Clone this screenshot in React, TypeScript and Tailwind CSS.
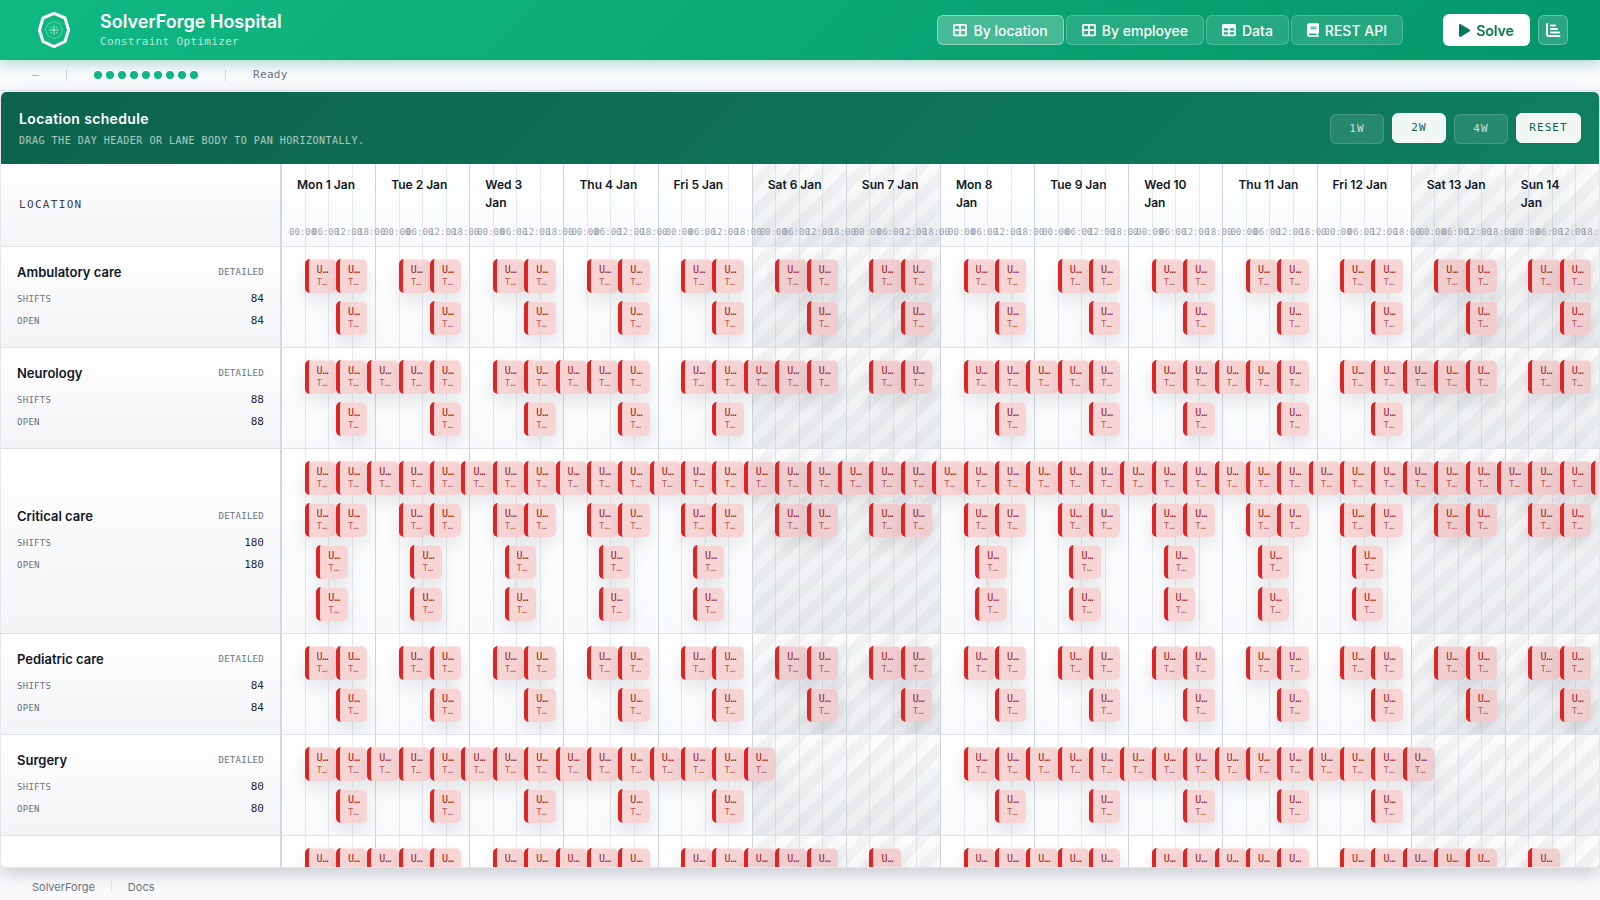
import React, { useState } from 'react';
import { FaPlay } from 'react-icons/fa';

type LaneRule = { hours: number[]; days: number[] };

interface LocationRow {
  name: string;
  count: number;
  lanes: LaneRule[][];
}

const DAYS = [
  'Mon 1 Jan', 'Tue 2 Jan', 'Wed 3\nJan', 'Thu 4 Jan', 'Fri 5 Jan', 'Sat 6 Jan', 'Sun 7 Jan',
  'Mon 8\nJan', 'Tue 9 Jan', 'Wed 10\nJan', 'Thu 11 Jan', 'Fri 12 Jan', 'Sat 13 Jan', 'Sun 14\nJan',
];
const TICKS = ['00:00', '06:00', '12:00', '18:00'];
const TOTAL_HOURS = DAYS.length * 24;
const SHIFT_HOURS = 8;

const ALL = DAYS.map((_, i) => i);
const WEEKDAYS = ALL.filter((i) => i % 7 < 5);
const ALTERNATE = [0, 2, 4, 7, 9, 11];
const NOT_SUNDAY = ALL.filter((i) => i % 7 !== 6);

const ROWS: LocationRow[] = [
  { name: 'Ambulatory care', count: 84, lanes: [[{ hours: [6, 14], days: ALL }], [{ hours: [14], days: ALL }]] },
  {
    name: 'Neurology',
    count: 88,
    lanes: [
      [{ hours: [6, 14], days: ALL }, { hours: [22], days: ALTERNATE }],
      [{ hours: [14], days: WEEKDAYS }],
    ],
  },
  {
    name: 'Critical care',
    count: 180,
    lanes: [
      [{ hours: [6, 14, 22], days: ALL }],
      [{ hours: [6, 14], days: ALL }],
      [{ hours: [9], days: WEEKDAYS }],
      [{ hours: [9], days: WEEKDAYS }],
    ],
  },
  { name: 'Pediatric care', count: 84, lanes: [[{ hours: [6, 14], days: ALL }], [{ hours: [14], days: ALL }]] },
  {
    name: 'Surgery',
    count: 80,
    lanes: [[{ hours: [6, 14, 22], days: WEEKDAYS }], [{ hours: [14], days: WEEKDAYS }]],
  },
  {
    name: 'Radiology',
    count: 84,
    lanes: [
      [{ hours: [6], days: ALL }, { hours: [14], days: NOT_SUNDAY }, { hours: [22], days: ALTERNATE }],
      [{ hours: [14], days: WEEKDAYS }],
      [{ hours: [9], days: WEEKDAYS }],
      [{ hours: [9], days: WEEKDAYS }],
    ],
  },
];

const startsOf = (rules: LaneRule[]) =>
  rules.flatMap((r) => r.days.flatMap((d) => r.hours.map((h) => d * 24 + h))).sort((a, b) => a - b);

// a shift counts as weekend work when it ends on a Saturday or Sunday
const endsOnWeekend = (start: number) => Math.floor((start + SHIFT_HOURS - 1) / 24) % 7 > 4;

const MONO = "font-['DejaVu_Sans_Mono',monospace]";

function Logo() {
  return (
    <svg viewBox="0 0 40 40" className="w-10 h-10" fill="none" stroke="white">
      <path d="M20 3.300 31 8 34.600 20 31 31.500 20 36.700 9 31.500 5.400 20 9 8Z" strokeWidth="3" strokeLinejoin="round" />
      <path d="M20 11.500 26 14 28.500 20 26 26 20 28.500 14 26 11.500 20 14 14Z" strokeWidth=".8" opacity=".4" />
      <path d="M20 15v10M15 20h10M16.500 16.500l1.500 1.500M23.500 16.500l-1.500 1.500M16.500 23.500l1.500-1.500M23.500 23.500l-1.500-1.500" strokeWidth=".9" opacity=".75" />
    </svg>
  );
}

function TableCellsIcon({ header = false }: { header?: boolean }) {
  return (
    <svg viewBox="0 0 512 512" className="w-[14px] h-[14px]" fill="currentColor" fillRule="evenodd">
      {header ? (
        <path d="M64 32h384a64 64 0 0 1 64 64v320a64 64 0 0 1-64 64H64a64 64 0 0 1-64-64V96a64 64 0 0 1 64-64ZM64 192v80h160v-80ZM288 192v80h160v-80ZM64 336v80h160v-80ZM288 336v80h160v-80Z" />
      ) : (
        <path d="M64 32h384a64 64 0 0 1 64 64v320a64 64 0 0 1-64 64H64a64 64 0 0 1-64-64V96a64 64 0 0 1 64-64ZM64 96v128h160V96ZM288 96v128h160V96ZM64 288v128h160V288ZM288 288v128h160V288Z" />
      )}
    </svg>
  );
}

function BookIcon() {
  return (
    <svg viewBox="0 0 448 512" className="w-3 h-[14px]" fill="currentColor" fillRule="evenodd">
      <path d="M96 0h320a32 32 0 0 1 32 32v320a32 32 0 0 1-32 32v64a32 32 0 0 1 0 64H96a96 96 0 0 1-96-96V96A96 96 0 0 1 96 0ZM96 384a32 32 0 0 0 0 64h256v-64ZM128 128v32h224v-32ZM128 192v32h224v-32Z" />
    </svg>
  );
}

function ChartIcon() {
  return (
    <svg viewBox="0 0 16 16" className="w-4 h-4" fill="none" stroke="currentColor" strokeWidth="2" strokeLinecap="round">
      <path d="M2 2v10.500a1.500 1.500 0 0 0 1.500 1.500H14.500M6 3.500h4M6 7h6M6 10.500h8" />
    </svg>
  );
}

const TABS = [
  { label: 'By location', icon: <TableCellsIcon /> },
  { label: 'By employee', icon: <TableCellsIcon /> },
  { label: 'Data', icon: <TableCellsIcon header /> },
  { label: 'REST API', icon: <BookIcon /> },
];

function TopBar() {
  const [tab, setTab] = useState('By location');
  return (
    <header className="relative z-10 h-[60px] shrink-0 flex items-center justify-between px-8 text-white bg-[linear-gradient(135deg,#10b981,#059669)] shadow-[0_4px_12px_rgba(5,150,105,0.3)]">
      <div className="flex items-center gap-6">
        <div className="w-11 flex justify-center">
          <Logo />
        </div>
        <div>
          <h1 className="text-[18px] leading-6 font-semibold">SolverForge Hospital</h1>
          <p className={`${MONO} text-[11px] leading-4 tracking-[0.03em] text-white/70`}>Constraint Optimizer</p>
        </div>
      </div>
      <div className="flex items-center">
        <nav className="flex gap-0.5 mr-10">
          {TABS.map(({ label, icon }) => (
            <button
              key={label}
              onClick={() => setTab(label)}
              className={`h-[30px] px-[15px] flex items-center gap-1.5 rounded-md border text-[14px] font-medium whitespace-nowrap ${
                tab === label ? 'bg-white/25 border-white/40' : 'bg-white/12 border-white/20'
              }`}
            >
              {icon}
              {label}
            </button>
          ))}
        </nav>
        <button className="h-8 w-[87px] mr-2 flex items-center justify-center gap-1.5 rounded-md bg-white text-[#047857] text-[14px] font-semibold">
          <FaPlay className="w-[11px] h-[13px]" preserveAspectRatio="none" />
          Solve
        </button>
        <button aria-label="Analyze" className="w-[30px] h-[30px] flex items-center justify-center rounded-md border border-white/30 bg-white/15">
          <ChartIcon />
        </button>
      </div>
    </header>
  );
}

function StatusBar() {
  return (
    <div className={`h-[31px] shrink-0 flex items-center px-8 bg-[#f9fafc] border-b border-gray-200 ${MONO} text-[11px] tracking-[0.03em] text-gray-500`}>
      <span className="text-gray-400 w-[34px]">—</span>
      <span className="w-px h-3 bg-gray-300" />
      <span className="flex gap-1 mx-[27px]">
        {Array.from({ length: 9 }, (_, i) => (
          <span key={i} className="w-2 h-2 rounded-full bg-[#10b981]" />
        ))}
      </span>
      <span className="w-px h-3 bg-gray-300" />
      <span className="ml-[27px]">Ready</span>
    </div>
  );
}

function ScheduleHeader() {
  const [zoom, setZoom] = useState('2W');
  return (
    <div className="h-[72px] shrink-0 flex items-center justify-between px-[18px] pt-0.5 bg-[linear-gradient(135deg,#0d634b,#0f7f5f)]">
      <div>
        <h2 className="text-[14px] leading-5 font-semibold text-white tracking-wide">Location schedule</h2>
        <p className={`${MONO} mt-1 text-[10px] leading-4 tracking-[0.05em] uppercase text-white/65`}>
          Drag the day header or lane body to pan horizontally.
        </p>
      </div>
      <div className={`flex gap-2 text-[11px] tracking-widest ${MONO}`}>
        {['1W', '2W', '4W'].map((z) => (
          <button
            key={z}
            onClick={() => setZoom(z)}
            className={`w-[54px] h-[30px] rounded-md border ${
              zoom === z ? '-translate-y-px bg-[#f0f7f5] border-white text-[#0f6149]' : 'bg-white/10 border-white/15 text-white/75'
            }`}
          >
            {z}
          </button>
        ))}
        <button className="w-[65px] h-[30px] -translate-y-px rounded-md border border-white bg-[#f0f7f5] text-[#0f6149]">
          RESET
        </button>
      </div>
    </div>
  );
}

// day columns with six-hour lines, weekends are hatched
function DayGrid() {
  return (
    <div className="absolute inset-0 flex">
      {DAYS.map((day, i) => (
        <div
          key={day}
          className={`flex-1 flex border-l border-[#d0d4de] ${
            i % 7 > 4
              ? 'bg-[repeating-linear-gradient(135deg,transparent_0_10px,rgba(75,80,90,0.05)_10px_20px),linear-gradient(to_bottom,rgba(75,80,90,0.02),rgba(75,80,90,0.08))]'
              : ''
          }`}
        >
          {TICKS.map((t, k) => (
            <div key={t} className={`flex-1 ${k > 0 ? 'border-l border-slate-500/15' : ''}`} />
          ))}
        </div>
      ))}
    </div>
  );
}

function DayHeader() {
  return (
    <div className="h-[83px] shrink-0 flex border-b border-[#dfe1e8]">
      <div className="w-[280px] shrink-0 flex items-center pl-[18px] border-r border-[#d5d8e0] bg-linear-to-b from-white to-[#f3f4f6]">
        <span className={`${MONO} text-[11px] tracking-[0.12em] text-gray-700`}>LOCATION</span>
      </div>
      <div className="relative flex-1 flex overflow-hidden bg-linear-to-b from-white to-[#f8fafc]">
        <DayGrid />
        {DAYS.map((day) => (
          <div key={day} className="relative flex-1 min-w-0 flex flex-col justify-between pt-3 pb-2">
            <div className="px-4 text-[12px] leading-[18px] font-semibold text-gray-900 whitespace-pre-line">{day}</div>
            <div className={`flex pl-2 ${MONO} text-[9px] leading-3 text-gray-400`}>
              {TICKS.map((t) => (
                <span key={t} className="w-[23px] shrink-0 whitespace-nowrap">
                  {t}
                </span>
              ))}
            </div>
          </div>
        ))}
      </div>
    </div>
  );
}

function Shift({ start }: { start: number }) {
  return (
    <button
      className={`absolute inset-y-0 flex flex-col justify-center overflow-hidden pl-2 pr-[5px] rounded-[5px] border-l-4 border-[#dc2626] text-left ${MONO} shadow-[inset_0_1px_0_rgba(255,255,255,0.4),0_8px_18px_rgba(15,23,42,0.1)] ${
        endsOnWeekend(start) ? 'bg-[#efcacc]/90' : 'bg-[#f7d0d0]/90'
      }`}
      style={{ left: `${(start / TOTAL_HOURS) * 100}%`, width: `${(SHIFT_HOURS / TOTAL_HOURS) * 100}%` }}
    >
      <span className="block w-full truncate text-[10px] leading-3 text-[#991b1b]">Unassigned</span>
      <span className="block w-full truncate text-[9px] leading-3 text-[#991b1b]/70">Team</span>
    </button>
  );
}

function ScheduleRow({ row }: { row: LocationRow }) {
  return (
    <div className="flex shrink-0 border-b border-[#dfe1e8]">
      <div className="w-[280px] shrink-0 flex flex-col justify-center px-4 border-r border-[#d5d8e0] bg-linear-to-b from-white to-[#f3f4f6]">
        <div className="flex items-center justify-between pb-2">
          <h3 className="text-[13px] leading-5 font-semibold text-gray-900">{row.name}</h3>
          <span className={`${MONO} pt-0.5 text-[9px] tracking-[0.03em] text-gray-500`}>DETAILED</span>
        </div>
        <dl className={`${MONO} flex flex-col gap-1 pb-0.5`}>
          {['SHIFTS', 'OPEN'].map((label) => (
            <div key={label} className="flex items-center justify-between leading-[18px]">
              <dt className="text-[9px] tracking-[0.03em] text-gray-500">{label}</dt>
              <dd className="text-[11px] text-gray-800">{row.count}</dd>
            </div>
          ))}
        </dl>
      </div>
      <div className="relative flex-1 overflow-hidden bg-linear-to-b from-white to-[#f8fafc]">
        <DayGrid />
        <div className="relative flex flex-col gap-2 py-3">
          {row.lanes.map((rules, i) => (
            <div key={i} className="relative h-[34px]">
              {startsOf(rules).map((s) => (
                <Shift key={s} start={s} />
              ))}
            </div>
          ))}
        </div>
      </div>
    </div>
  );
}

export default function App() {
  return (
    <div className="h-screen flex flex-col overflow-hidden bg-[#f9fafc] font-[Inter,sans-serif] text-gray-900">
      <TopBar />
      <StatusBar />
      <main className="relative flex-1 min-h-0 flex flex-col mt-px border-x border-b border-gray-200 rounded-md overflow-hidden bg-white shadow-[0_6px_18px_rgba(15,23,42,0.2)]">
        <ScheduleHeader />
        <DayHeader />
        <div className="flex-1 min-h-0 flex flex-col overflow-hidden">
          {ROWS.map((row) => (
            <ScheduleRow key={row.name} row={row} />
          ))}
        </div>
      </main>
      <footer className="h-8 shrink-0 flex items-center px-8 pt-1.5 text-[11px] text-gray-500">
        <a href="#solverforge">SolverForge</a>
        <span className="w-px h-3 mx-4 bg-gray-200" />
        <a href="#docs">Docs</a>
      </footer>
    </div>
  );
}
